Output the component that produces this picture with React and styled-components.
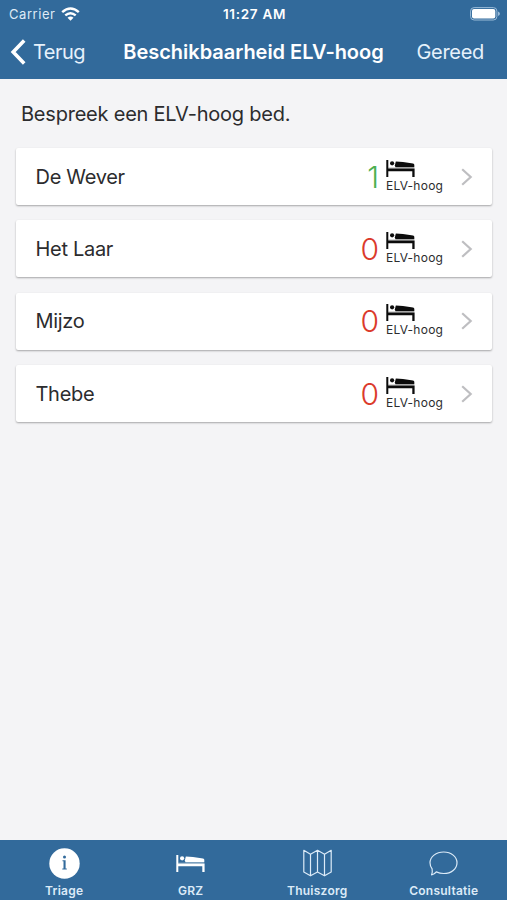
import React from 'react'
import styled, { createGlobalStyle } from 'styled-components'

const GlobalStyle = createGlobalStyle`
  * {
    box-sizing: border-box;
  }

  body {
    margin: 0;
    background: #f4f4f6;
    font-family: Inter, 'Liberation Sans', sans-serif;
    color: #2c2c2e;
  }
`

const Screen = styled.div`
  display: flex;
  flex-direction: column;
  height: 100vh;
  overflow: hidden;
`

const Header = styled.header`
  height: 79px;
  background: #326a9b;
  color: white;
`

const StatusBar = styled.div`
  display: grid;
  grid-template-columns: 1fr auto 1fr;
  align-items: center;
  height: 28px;
  padding: 0 7px 0 9px;
  font-size: 13px;
  line-height: 16px;
`

const Carrier = styled.div`
  display: flex;
  align-items: center;
  gap: 6px;
  color: #dfebf6;
  letter-spacing: 0.55px;
`

const Time = styled.div`
  font-size: 13.5px;
  font-weight: 600;
  letter-spacing: 0.7px;
`

const BatteryIcon = styled.svg`
  width: 30px;
  height: 14px;
  justify-self: end;
`

const WifiIcon = styled.svg`
  width: 19px;
  height: 14px;
`

const NavBar = styled.nav`
  display: grid;
  grid-template-columns: 1fr auto 1fr;
  align-items: center;
  height: 48px;
  padding: 0 10px;
  font-size: 20px;
`

const BackButton = styled.div`
  display: flex;
  align-items: center;
  gap: 7px;
  color: #e6f1fb;
  letter-spacing: -0.5px;
`

const BackIcon = styled.svg`
  width: 16px;
  height: 26px;
`

const Title = styled.div`
  font-weight: 600;
  letter-spacing: -0.03px;
  white-space: nowrap;
`

const DoneButton = styled.div`
  justify-self: end;
  margin-right: 13px;
  color: #e6f1fb;
  letter-spacing: -0.3px;
`

const Content = styled.main`
  flex: 1;
  padding: 21px 15px 0 16px;
`

const Intro = styled.p`
  margin: 0 0 20px 5px;
  font-size: 20px;
  line-height: 28px;
  letter-spacing: -0.22px;
`

const List = styled.div`
  display: flex;
  flex-direction: column;
  gap: 15.4px;
`

const Card = styled.div`
  display: flex;
  align-items: center;
  height: 57px;
  padding: 0 19px 0 19.5px;
  background: white;
  border-radius: 2px;
  box-shadow: 0 1px 2px rgba(0, 0, 0, 0.32);
`

const Name = styled.div`
  flex: 1;
  font-size: 20px;
  letter-spacing: -0.3px;
`

const Count = styled.div`
  margin-right: 7px;
  color: ${({ $available }) => ($available ? '#4caf50' : '#db3a2c')};
  font-size: 30px;
  font-weight: 300;
  line-height: 36px;
`

const BedSvg = styled.svg`
  display: block;
  width: 29px;
  height: 17px;
`

const BedType = styled.div`
  width: 57px;
  margin: -1px 18px 0 0;
  font-size: 12px;
  line-height: 14px;
  letter-spacing: 0.25px;
  white-space: nowrap;

  ${BedSvg} {
    margin-bottom: 2px;
    color: #0c0c0c;
  }
`

const ChevronIcon = styled.svg`
  width: 12px;
  height: 18px;
`

const TabBar = styled.footer`
  display: grid;
  grid-template-columns: repeat(4, 1fr);
  height: 60px;
  padding-left: 1px;
  background: #326a9b;
  color: #dcebf8;
`

const Tab = styled.div`
  display: flex;
  flex-direction: column;
  align-items: center;
  padding-top: 7px;
  font-size: 12px;
  font-weight: 600;
  line-height: 14px;
  letter-spacing: 0.25px;

  ${BedSvg} {
    color: white;
  }
`

const TabIcon = styled.div`
  display: flex;
  align-items: center;
  justify-content: center;
  height: 32px;
  margin-bottom: 5px;
`

const BedIcon = () => (
  <BedSvg viewBox="0 0 29 17" fill="currentColor">
    <path d="M.3 0h2v8.6H28.6V17h-2.3v-5.8h-24V17h-2z" />
    <path d="M2.3 7.4H28.3V8.6H2.3z" opacity=".25" />
    <circle cx="6.1" cy="3.3" r="2.1" />
    <path d="M9.8 1.5L17 1.9 27 3.4Q28.3 3.7 28.3 5V7.3H9.5L8.8 5.6z" />
  </BedSvg>
)

const InfoIcon = () => (
  <svg width="31" height="31" viewBox="0 0 31 31">
    <circle cx="15.5" cy="15.5" r="15.2" fill="#fff" />
    <circle cx="15.5" cy="9" r="1.5" fill="#326a9b" />
    <path d="M13.5 12.2h3.1v8.2h1.2v1.1h-4.5v-1.1h1.2v-7.1h-1z" fill="#326a9b" />
  </svg>
)

const MapIcon = () => (
  <svg width="29" height="28" viewBox="0 0 29 28" fill="none" stroke="currentColor" strokeWidth="1.2" strokeLinejoin="round">
    <path d="M.8 1.3L7.5 5.2 14.5 1.3 21.5 5.2 28.2 1.3V23L21.5 26.8 14.5 23 7.5 26.8.8 23zM7.5 5.2V26.8M14.5 1.3V23M21.5 5.2V26.8" />
  </svg>
)

const ChatIcon = () => (
  <svg width="29" height="25" viewBox="0 0 29 25" fill="none" stroke="currentColor" strokeWidth="1.2" strokeLinejoin="round">
    <path d="M14.7 1C22.2 1 28 5.7 28 11.8S22.2 22.5 14.7 22.5C12 22.5 9.5 21.9 7.3 20.9 6.2 22.4 4.5 23.6 2.6 24 3.4 22 3.5 20 3.1 17.9 1.8 16.2 1 14.1 1 11.8 1 5.7 7.1 1 14.7 1z" />
  </svg>
)

const locations = [
  { name: 'De Wever', count: 1 },
  { name: 'Het Laar', count: 0 },
  { name: 'Mijzo', count: 0 },
  { name: 'Thebe', count: 0 },
]

const tabs = [
  { label: 'Triage', Icon: InfoIcon },
  { label: 'GRZ', Icon: BedIcon },
  { label: 'Thuiszorg', Icon: MapIcon },
  { label: 'Consultatie', Icon: ChatIcon },
]

const LocationCard = ({ name, count }) => (
  <Card>
    <Name>{name}</Name>
    <Count $available={count > 0}>{count}</Count>
    <BedType>
      <BedIcon />
      ELV-hoog
    </BedType>
    <ChevronIcon viewBox="0 0 12 18" fill="none" stroke="#bebec1" strokeWidth="2.2">
      <path d="M1.2 1.2L9.7 9 1.2 16.8" />
    </ChevronIcon>
  </Card>
)

const App = () => (
  <>
    <GlobalStyle />
    <Screen>
      <Header>
        <StatusBar>
          <Carrier>
            Carrier
            <WifiIcon viewBox="0 0 19 14" fill="none" stroke="#fff" strokeWidth="2.5">
              <path d="M1.2 5.1Q9.5-2.1 17.8 5.1M4.3 8.4Q9.5 4 14.7 8.4" />
              <path d="M6.5 10.7Q9.5 8.3 12.5 10.7L9.5 13.7z" fill="#fff" stroke="none" />
            </WifiIcon>
          </Carrier>
          <Time>11:27 AM</Time>
          <BatteryIcon viewBox="0 0 30 14">
            <rect x=".6" y=".6" width="26.3" height="12.4" rx="3.5" fill="none" stroke="#9abbd8" />
            <rect x="2" y="2" width="23.3" height="9.6" rx="2" fill="#fff" />
            <path d="M28 4.6Q30 5.3 30 6.8T28 9z" fill="#9abbd8" />
          </BatteryIcon>
        </StatusBar>
        <NavBar>
          <BackButton>
            <BackIcon viewBox="0 0 16 26" fill="none" stroke="#fff" strokeWidth="3.6">
              <path d="M14.2 1.6L3.2 13 14.2 24.4" />
            </BackIcon>
            Terug
          </BackButton>
          <Title>Beschikbaarheid ELV-hoog</Title>
          <DoneButton>Gereed</DoneButton>
        </NavBar>
      </Header>
      <Content>
        <Intro>Bespreek een ELV-hoog bed.</Intro>
        <List>
          {locations.map(location => (
            <LocationCard key={location.name} {...location} />
          ))}
        </List>
      </Content>
      <TabBar>
        {tabs.map(({ label, Icon }) => (
          <Tab key={label}>
            <TabIcon>
              <Icon />
            </TabIcon>
            {label}
          </Tab>
        ))}
      </TabBar>
    </Screen>
  </>
)

export default App
